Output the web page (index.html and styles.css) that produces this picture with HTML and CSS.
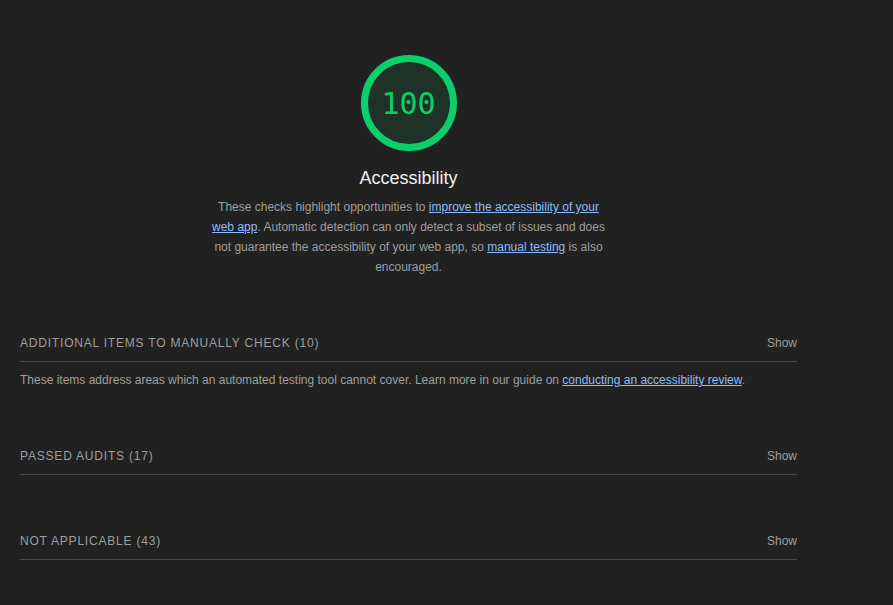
FILE: index.html
```html
<!DOCTYPE html>
<html lang="en">
<head>
<meta charset="utf-8">
<title>Accessibility</title>
<link rel="stylesheet" href="styles.css">
</head>
<body>
<main class="category">
  <section class="summary">
    <div class="gauge">
      <svg class="gauge-svg" width="96" height="96" viewBox="0 0 96 96">
        <circle cx="48" cy="48" r="44.5" fill="rgba(12,206,107,0.1)" stroke="#0cce6b" stroke-width="7"/>
      </svg>
      <span class="gauge-score">100</span>
    </div>
    <h2 class="title">Accessibility</h2>
    <p class="summary-desc">These checks highlight opportunities to <a href="#">improve the accessibility of your web app</a>. Automatic detection can only detect a subset of issues and does not guarantee the accessibility of your web app, so <a href="#">manual testing</a> is also encouraged.</p>
  </section>

  <section class="group">
    <div class="group-header"><span class="group-title">Additional items to manually check (10)</span><span class="show">Show</span></div>
    <p class="group-desc">These items address areas which an automated testing tool cannot cover. Learn more in our guide on <a href="#">conducting an accessibility review</a>.</p>
  </section>

  <section class="group">
    <div class="group-header"><span class="group-title">Passed audits (17)</span><span class="show">Show</span></div>
  </section>

  <section class="group">
    <div class="group-header"><span class="group-title">Not applicable (43)</span><span class="show">Show</span></div>
  </section>
</main>
</body>
</html>
```
FILE: styles.css
```css
html, body {
  margin: 0;
  padding: 0;
  background: #212121;
}
body {
  font-family: "Liberation Sans", Arial, sans-serif;
  font-size: 12px;
  color: #9e9e9e;
}
a {
  color: #8cbcfc;
  text-decoration: underline;
}
.category {
  width: 777px;
  margin-left: 20px;
  padding-top: 55px;
}
.summary {
  display: flex;
  flex-direction: column;
  align-items: center;
}
.gauge {
  position: relative;
  width: 96px;
  height: 96px;
}
.gauge-svg {
  display: block;
}
.gauge-score {
  position: absolute;
  inset: 0;
  display: flex;
  align-items: center;
  justify-content: center;
  font-family: "DejaVu Sans Mono", monospace;
  font-size: 30px;
  color: #0cce6b;
}
.title {
  margin: 15px 0 0;
  font-size: 18px;
  line-height: 24px;
  font-weight: normal;
  color: #f0f0f0;
}
.summary-desc {
  margin: 7px 0 0;
  width: 400px;
  text-align: center;
  line-height: 20px;
}
.group {
  margin-top: 45px;
}
.group-header {
  display: flex;
  justify-content: space-between;
  align-items: center;
  padding: 13px 0 10px;
  line-height: 16px;
  border-bottom: 1px solid #484848;
}
.group-title {
  text-transform: uppercase;
  letter-spacing: 0.8px;
}
.show {
  color: #9e9e9e;
}
.group-desc {
  margin: 8px 0 0;
  line-height: 20px;
}
```
